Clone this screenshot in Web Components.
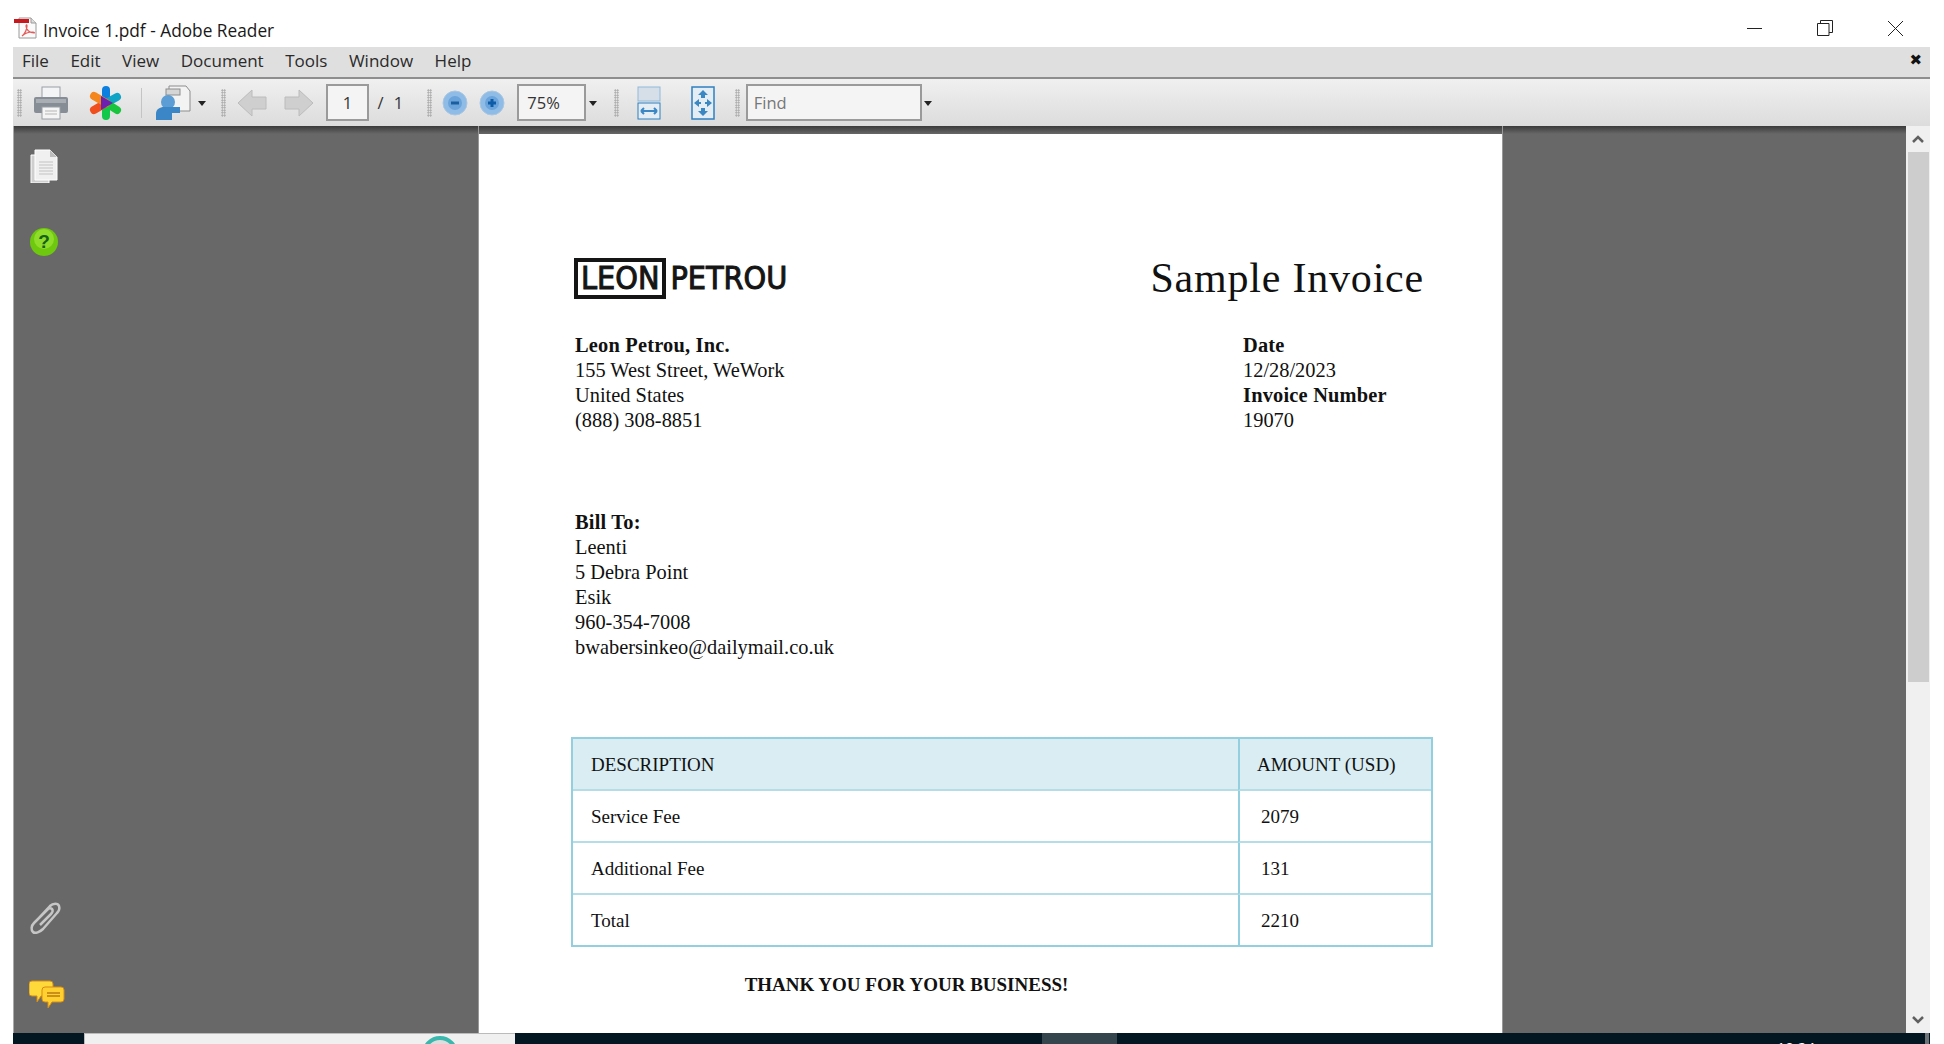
<!DOCTYPE html>
<html>
<head>
<meta charset="utf-8">
<title>Invoice 1.pdf - Adobe Reader</title>
<style>
  html, body { margin: 0; height: 100%; background: #fff; overflow: hidden; }
  body { font-family: "Open Sans", "Liberation Sans", sans-serif; }
</style>
</head>
<body>
<reader-window>
  <title-bar>Invoice 1.pdf - Adobe Reader</title-bar>
  <menu-bar></menu-bar>
  <tool-bar></tool-bar>
  <doc-area></doc-area>
  <task-strip></task-strip>
</reader-window>

<script>
class ReaderWindow extends HTMLElement {
  constructor() {
    super();
    this.attachShadow({mode: 'open'});
    this.shadowRoot.innerHTML = `
      <style>
        :host { display: flex; flex-direction: column; height: 1044px; margin: 0 14px 0 13px; overflow: hidden; }
      </style>
      <slot></slot>`;
  }
}

class TitleBar extends HTMLElement {
  constructor() {
    super();
    this.attachShadow({mode: 'open'});
    this.shadowRoot.innerHTML = `
      <style>
        :host { display: flex; align-items: center; height: 47px; flex: none; background: #fff; color: #1a1a1a; font-size: 17.3px; }
        .doc { margin: 8px 5px 0 1px; flex: none; }
        .name { flex: 1; padding-top: 14px; }
        .btn { width: 70px; height: 47px; padding-top: 9px; box-sizing: border-box; display: flex; align-items: center; justify-content: center; flex: none; }
      </style>
      <svg class="doc" width="24" height="24" viewBox="0 0 24 24">
        <path d="M5 2h12l5 5v15H5z" fill="#fafafa" stroke="#9a9a9a"/>
        <path d="M17 2v5h5" fill="#ddd" stroke="#9a9a9a"/>
        <rect x="0" y="3" width="15" height="4" fill="#c8171d"/>
        <path d="M8 20c3-2 5-7 5-10 0-2-1-1-1 0 0 4 4 7 8 7 1 0 0-1-1-1-4 0-8 1-11 4z" fill="none" stroke="#e35a5a" stroke-width="1.2"/>
      </svg>
      <span class="name"><slot></slot></span>
      <div class="btn"><svg width="16" height="16" viewBox="0 0 16 16"><path d="M0 8.5h15" stroke="#222"/></svg></div>
      <div class="btn"><svg width="16" height="16" viewBox="0 0 16 16"><path d="M.5 3.5h11.5v12H.5zM3.5 3.5V.5h12v12H12" fill="none" stroke="#222"/></svg></div>
      <div class="btn"><svg width="17" height="17" viewBox="0 0 17 17"><path d="M1 1l15 15M16 1L1 16" stroke="#222"/></svg></div>`;
  }
}

class MenuBar extends HTMLElement {
  constructor() {
    super();
    this.attachShadow({mode: 'open'});
    const items = ['File', 'Edit', 'View', 'Document', 'Tools', 'Window', 'Help'];
    this.shadowRoot.innerHTML = `
      <style>
        :host { display: flex; align-items: center; flex: none; background: #dfdfdf; border-bottom: 2px solid #8e8e8e; padding: 0 0 4px 9px; box-sizing: border-box; height: 32px; gap: 21.5px; font-size: 17px; color: #2a2a2a; }
        .close { margin-left: auto; margin-right: 8px; font-size: 15px; font-weight: 700; color: #111; font-family: "DejaVu Sans", sans-serif; }
      </style>
      ${items.map(i => `<span>${i}</span>`).join('')}
      <span class="close">&#10006;</span>`;
  }
}

class ToolBar extends HTMLElement {
  constructor() {
    super();
    this.attachShadow({mode: 'open'});
    const grip = `<i class="grip"></i>`;
    this.shadowRoot.innerHTML = `
      <style>
        :host { display: flex; align-items: center; height: 47px; flex: none; background: linear-gradient(#f0f0f0, #dcdcdc); padding-left: 4px; color: #333; font-size: 16.5px; box-sizing: border-box; }
        svg { flex: none; display: block; }
        .grip { width: 5px; height: 28px; flex: none; background: radial-gradient(circle, #a5a5a5 .8px, transparent 1px) 0 0 / 2.5px 2.5px; }
        .sep { width: 1px; height: 30px; flex: none; background: #c4c4c4; margin: 0 13px 0 17px; }
        .caret { width: 0; height: 0; flex: none; border: 4.5px solid transparent; border-top: 5px solid #222; border-bottom: 0; }
        .box { box-sizing: border-box; height: 37px; flex: none; display: flex; align-items: center; padding-bottom: 1px; background: #f4f4f4; border: 2px solid #9a9a9a; }
        .page { width: 43px; justify-content: center; margin-left: 12px; }
        .total { margin: 0 24px 0 8.5px; word-spacing: 6px; white-space: pre; }
        .zoom { width: 69px; padding-left: 8px; margin-left: 12px; }
        .find { width: 176px; padding-left: 6px; color: #777; margin-left: 6px; }
      </style>
      ${grip}
      <svg style="margin-left:11px" width="36" height="34" viewBox="0 0 36 34">
        <rect x="9" y="1" width="18" height="11" fill="#f2f4f6" stroke="#9aa0a6"/>
        <path d="M3 11h30a2 2 0 0 1 2 2v12a2 2 0 0 1-2 2H3a2 2 0 0 1-2-2V13a2 2 0 0 1 2-2z" fill="#868d94"/>
        <rect x="3" y="13" width="30" height="4" fill="#a8aeb3"/>
        <rect x="9" y="21" width="18" height="12" fill="#f5f5f5" stroke="#9aa0a6"/>
        <path d="M12 25h12M12 28h12" stroke="#b5b5b5"/>
      </svg>
      <svg style="margin-left:19px" width="36" height="36" viewBox="0 0 36 36">
        <g fill="none" stroke-width="8" stroke-linecap="round">
          <path d="M18 18V5" stroke="#0d7fe0"/>
          <path d="M18 18l11-6" stroke="#0fa3c6"/>
          <path d="M18 18l11 7" stroke="#19c53c"/>
          <path d="M18 18v13" stroke="#12c84a"/>
          <path d="M18 18L6 25" stroke="#f04e1c"/>
          <path d="M18 18L6 11" stroke="#f5861e"/>
        </g>
        <path d="M13 11l12 7-12 7z" fill="#6d1fb0"/>
      </svg>
      <i class="sep"></i>
      <svg width="36" height="36" viewBox="0 0 36 36">
        <path d="M14 1h17l4 5v20H14z" fill="#f3f3f3" stroke="#8d8d8d"/>
        <rect x="11" y="4" width="14" height="6" fill="#d5d5d5" stroke="#8d8d8d"/>
        <circle cx="13" cy="17" r="7" fill="#5b9dd4"/>
        <path d="M1 35v-6c0-5 4-7 8-7h9l7 0v6h-8v7z" fill="#3a86c6"/>
      </svg>
      <i class="caret" style="margin:2px 15px 0 7px"></i>
      ${grip}
      <svg style="margin-left:11px" width="30" height="30" viewBox="0 0 30 30"><path d="M1 15L15 2v7h14v12H15v7z" fill="#cfcfcf" stroke="#bcbcbc"/></svg>
      <svg style="margin-left:17px" width="30" height="30" viewBox="0 0 30 30"><path d="M29 15L15 2v7H1v12h14v7z" fill="#cfcfcf" stroke="#bcbcbc"/></svg>
      <div class="box page">1</div>
      <span class="total">/ 1</span>
      ${grip}
      <svg style="margin-left:10px" width="26" height="26" viewBox="0 0 26 26"><circle cx="13" cy="13" r="12" fill="#8fbce6" stroke="#a9c7e2"/><circle cx="13" cy="13" r="7" fill="#6ba4da"/><path d="M9 13h8" stroke="#1a5e9f" stroke-width="3"/></svg>
      <svg style="margin-left:11px" width="26" height="26" viewBox="0 0 26 26"><circle cx="13" cy="13" r="12" fill="#8fbce6" stroke="#a9c7e2"/><circle cx="13" cy="13" r="7" fill="#6ba4da"/><path d="M9 13h8M13 9v8" stroke="#0e5ca8" stroke-width="3"/></svg>
      <div class="box zoom">75%</div>
      <i class="caret" style="margin:2px 17px 0 3px"></i>
      ${grip}
      <svg style="margin-left:18px" width="24" height="34" viewBox="0 0 24 34">
        <rect x="1" y="1" width="22" height="14" fill="#d6dfe8" stroke="#8fb9dc"/>
        <rect x="1" y="17" width="22" height="16" fill="#e4edf4" stroke="#2f7fc0"/>
        <path d="M4 25h16M4 25l3-3M4 25l3 3M20 25l-3-3M20 25l-3 3" fill="none" stroke="#3b87c4" stroke-width="2"/>
      </svg>
      <svg style="margin-left:30px" width="24" height="34" viewBox="0 0 24 34">
        <rect x="1" y="1" width="22" height="32" fill="#e4edf4" stroke="#2f7fc0" stroke-width="1.5"/>
        <path d="M12 4l-5 5h3v3h4V9h3zM12 30l-5-5h3v-3h4v3h3zM3 17l5-4v3h2v2H8v3zM21 17l-5-4v3h-2v2h2v3z" fill="#3b87c4"/>
      </svg>
      <i class="grip" style="margin-left:19.5px"></i>
      <div class="box find">Find</div>
      <i class="caret" style="margin:2px 0 0 2px"></i>`;
  }
}

class DocArea extends HTMLElement {
  constructor() {
    super();
    this.attachShadow({mode: 'open'});
    this.shadowRoot.innerHTML = `
      <style>
        :host { display: grid; grid-template-columns: 466px 1023px 404px 24px; height: 907px; flex: none; background: linear-gradient(#3a3a3a, #686868 8px); overflow: hidden; }
        .sheet { margin-top: 8px; min-height: 0; }
        .right { border-left: 1px solid #999; }
      </style>
      <side-rail></side-rail>
      <invoice-page class="sheet"></invoice-page>
      <div class="right"></div>
      <scroll-bar></scroll-bar>`;
  }
}

class SideRail extends HTMLElement {
  constructor() {
    super();
    this.attachShadow({mode: 'open'});
    this.shadowRoot.innerHTML = `
      <style>
        :host { display: flex; flex-direction: column; padding: 23px 0 25px 16px; box-sizing: border-box; height: 907px; border-left: 1px solid #aaa; border-right: 1px solid #999; }
        svg { display: block; }
        .grow { flex: 1; }
      </style>
      <svg width="28" height="34" viewBox="0 0 28 34">
        <path d="M1 6h18v28H1z" fill="#cfcfcf" stroke="#fff"/>
        <path d="M5 1h15l7 7v23H5z" fill="#f0f0f0" stroke="#fff"/>
        <path d="M20 1v7h7z" fill="#bdbdbd"/>
        <path d="M9 13h14M9 16h14M9 19h14M9 22h14M9 25h14" stroke="#c2c2c2"/>
      </svg>
      <svg style="margin-top:44px;margin-left:-1px" width="30" height="30" viewBox="0 0 30 30">
        <circle cx="15" cy="15" r="14" fill="#6dc80e"/>
        <circle cx="15" cy="12" r="10" fill="#8fdc2a"/>
        <text x="15" y="21" text-anchor="middle" font-family="Liberation Sans" font-weight="700" font-size="19" fill="#15601a">?</text>
      </svg>
      <div class="grow"></div>
      <svg width="32" height="36" viewBox="0 0 32 36">
        <path d="M6 20L20 5c3-3 8-3 9 0s0 5-2 7L13 28c-3 3-8 5-10 3S1 25 4 22L17 9c2-2 4-2 5-1s1 3-1 5L10 24" fill="none" stroke="#c6c6c6" stroke-width="2.5"/>
      </svg>
      <svg style="margin-top:43px;margin-left:-1px" width="36" height="28" viewBox="0 0 36 28">
        <path d="M3 1h18a3 3 0 0 1 3 3v9a3 3 0 0 1-3 3H12l-4 6v-6H3a3 3 0 0 1-3-3V4a3 3 0 0 1 3-3z" fill="#ffd83a" stroke="#d78b12"/>
        <path d="M16 7h16a3 3 0 0 1 3 3v9a3 3 0 0 1-3 3h-9l-4 6v-6h-3a3 3 0 0 1-3-3v-9a3 3 0 0 1 3-3z" fill="#ffd030" stroke="#d78b12"/>
        <path d="M18 13h13M18 16h13" stroke="#b97a10" stroke-width="1.3"/>
      </svg>`;
  }
}

class InvoicePage extends HTMLElement {
  constructor() {
    super();
    this.attachShadow({mode: 'open'});
    this.shadowRoot.innerHTML = `
      <style>
        :host { display: block; background: #fff; color: #111; font-family: "Liberation Serif", "DejaVu Serif", serif; font-size: 20.4px; line-height: 25px; padding: 123px 78px 0 95px; box-sizing: border-box; height: 899px; overflow: hidden; }
        .head { display: flex; justify-content: space-between; align-items: center; height: 42px; }
        .logo { display: flex; align-items: center; gap: 4px; font-family: "DejaVu Sans", sans-serif; font-stretch: condensed; font-size: 32px; line-height: 1; color: #151515; -webkit-text-stroke: 1px #151515; }
        .logo b { border: 4px solid #151515; padding: 0 3px; display: block; box-sizing: border-box; height: 41px; line-height: 33px; font-weight: 400; }
        h1 { margin: 0; font-weight: 400; font-size: 42px; line-height: 42px; letter-spacing: .8px; }
        .info { display: flex; justify-content: space-between; margin-top: 34px; padding-left: 1px; }
        .meta { width: 181px; }
        .bill { margin-top: 77px; padding-left: 1px; }
        strong { display: block; letter-spacing: .2px; }
        invoice-table { margin: 77px -9px 0 -3px; }
        .thanks { margin-top: 25px; width: 665px; text-align: center; font-weight: 700; font-size: 19px; }
      </style>
      <div class="head">
        <div class="logo"><b>LEON</b><span>PETROU</span></div>
        <h1>Sample Invoice</h1>
      </div>
      <div class="info">
        <div>
          <strong>Leon Petrou, Inc.</strong>
          155 West Street, WeWork<br>United States<br>(888) 308-8851
        </div>
        <div class="meta">
          <strong>Date</strong>
          12/28/2023
          <strong>Invoice Number</strong>
          19070
        </div>
      </div>
      <div class="bill">
        <strong>Bill To:</strong>
        Leenti<br>5 Debra Point<br>Esik<br>960-354-7008<br>bwabersinkeo@dailymail.co.uk
      </div>
      <invoice-table></invoice-table>
      <div class="thanks">THANK YOU FOR YOUR BUSINESS!</div>`;
  }
}

class InvoiceTable extends HTMLElement {
  constructor() {
    super();
    this.attachShadow({mode: 'open'});
    const rows = [['DESCRIPTION', 'AMOUNT (USD)'], ['Service Fee', '2079'], ['Additional Fee', '131'], ['Total', '2210']];
    this.shadowRoot.innerHTML = `
      <style>
        :host { display: grid; grid-template-columns: 665px 1fr; grid-auto-rows: 52px; border: 2px solid #93cfde; box-sizing: border-box; height: 210px; font-size: 19px; }
        div { display: flex; align-items: center; padding-left: 18px; border-bottom: 2px solid #b5dde8; }
        div.amt { border-left: 2px solid #93cfde; padding-left: 21px; }
        div.hd { background: #d9edf3; }
        div.hd.amt { padding-left: 17px; }
        div.last { border-bottom: 0; padding-bottom: 2px; box-sizing: border-box; }
      </style>
      ${rows.map((r, i) => {
        const hd = i === 0 ? ' hd' : '';
        const last = i === rows.length - 1 ? ' last' : '';
        return `<div class="${hd}${last}">${r[0]}</div><div class="amt${hd}${last}">${r[1]}</div>`;
      }).join('')}`;
  }
}

class ScrollBar extends HTMLElement {
  constructor() {
    super();
    this.attachShadow({mode: 'open'});
    this.shadowRoot.innerHTML = `
      <style>
        :host { display: flex; flex-direction: column; align-items: center; background: #f0f0f0; height: 907px; }
        svg { flex: none; margin: 8px 0; }
        .thumb { width: 21px; height: 530px; flex: none; background: #cdcdcd; }
        .track { flex: 1; }
      </style>
      <svg width="12" height="10" viewBox="0 0 12 10"><path d="M1 8l5-5 5 5" fill="none" stroke="#606060" stroke-width="2.5"/></svg>
      <div class="thumb"></div>
      <div class="track"></div>
      <svg width="12" height="10" viewBox="0 0 12 10"><path d="M1 2l5 5 5-5" fill="none" stroke="#606060" stroke-width="2.5"/></svg>`;
  }
}

class TaskStrip extends HTMLElement {
  constructor() {
    super();
    this.attachShadow({mode: 'open'});
    this.shadowRoot.innerHTML = `
      <style>
        :host { display: flex; height: 11px; flex: none; background: #021722; overflow: hidden; }
        .search { width: 431px; margin-left: 71px; background: #f0f0f0; border-left: 1px solid #bbb; border-top: 1px solid #bbb; box-sizing: border-box; flex: none; position: relative; overflow: hidden; }
        .search svg { position: absolute; left: 336px; top: 1px; }
        .active { width: 75px; margin-left: 527px; background: #35454d; flex: none; }
        .clock { margin-left: auto; color: #fff; font-size: 15px; line-height: 15px; margin-top: 7px; flex: none; }
        .edge { width: 4px; margin: 0 1px 0 110px; background: #6f7478; flex: none; }
      </style>
      <div class="search">
        <svg width="38" height="38" viewBox="0 0 38 38"><circle cx="19" cy="19" r="16" fill="#ddd" stroke="#3bb8ad" stroke-width="4"/></svg>
      </div>
      <div class="active"></div>
      <span class="clock">10:24</span>
      <div class="edge"></div>`;
  }
}

customElements.define('reader-window', ReaderWindow);
customElements.define('title-bar', TitleBar);
customElements.define('menu-bar', MenuBar);
customElements.define('tool-bar', ToolBar);
customElements.define('doc-area', DocArea);
customElements.define('side-rail', SideRail);
customElements.define('invoice-table', InvoiceTable);
customElements.define('invoice-page', InvoicePage);
customElements.define('scroll-bar', ScrollBar);
customElements.define('task-strip', TaskStrip);
</script>
</body>
</html>
